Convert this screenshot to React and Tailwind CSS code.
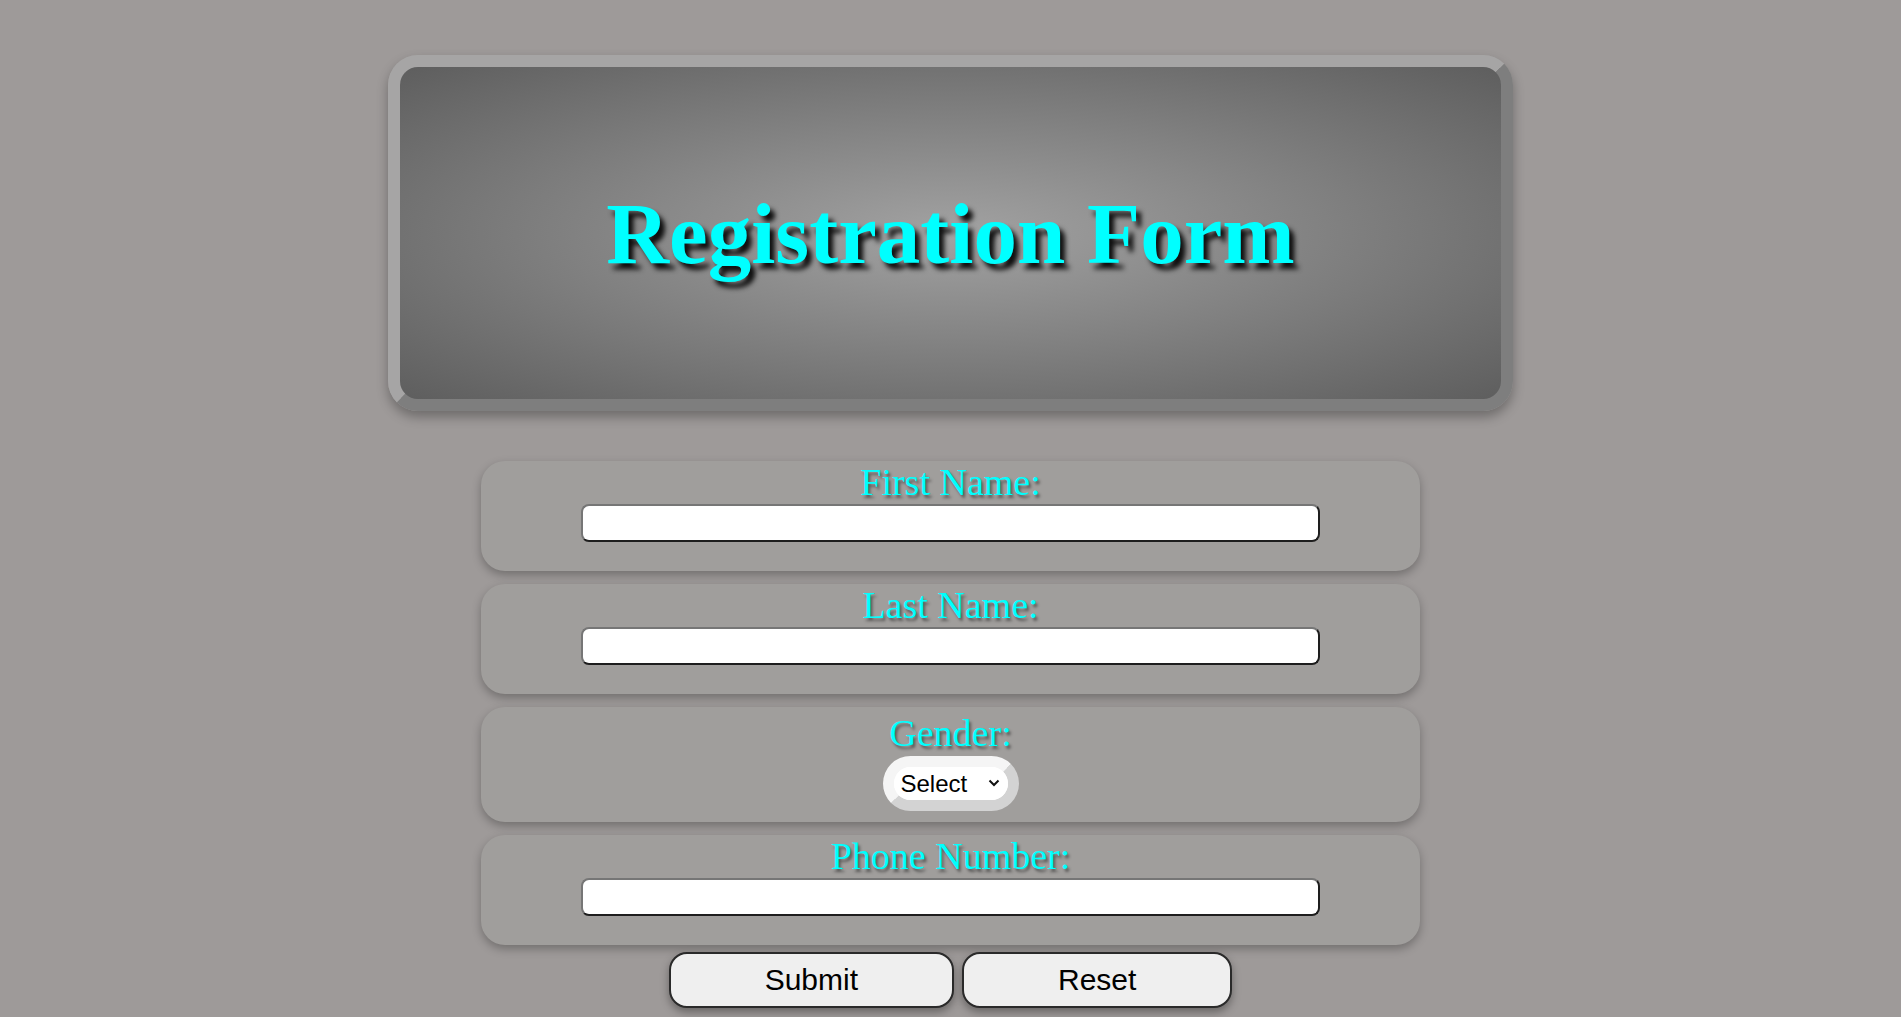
import React from "react";

const labelCls =
  "block text-[38px] leading-none text-[#00ffff] [text-shadow:2px_3px_3px_rgba(0,0,0,0.45)]";
const inputCls =
  "w-[739px] h-[38px] rounded-[8px] bg-white border-2 border-t-[#767676] border-l-[#767676] border-b-[#1e1e1e] border-r-[#1e1e1e] outline-none px-2 text-[20px]";
const rowCls =
  "w-[939px] flex flex-col items-center rounded-[24px] bg-[#a09e9c] shadow-[0_4px_10px_rgba(0,0,0,0.28)]";
const btnCls =
  "px-[94px] py-[9px] text-[30px] leading-[34px] text-black bg-[#efefef] border-2 border-[#2a2a2a] rounded-[18px] shadow-[0_4px_8px_rgba(0,0,0,0.35)]";

const TextRow = ({ label }) => (
  <div className={`${rowCls} h-[110px] pt-[2px]`}>
    <label className={`${labelCls} mb-[3px]`}>{label}</label>
    <input type="text" className={inputCls} />
  </div>
);

const App = () => {
  return (
    <div className="min-h-screen w-full bg-[#9e9a99] flex flex-col items-center pt-[55px] font-['Liberation_Serif',serif]">
      <header className="w-[1125px] h-[356px] rounded-[30px] border-[12px] border-t-[#a6a5a5] border-l-[#a6a5a5] border-b-[#7e7e7e] border-r-[#7e7e7e] shadow-[0_6px_12px_rgba(0,0,0,0.3)] bg-[radial-gradient(ellipse_at_center,#a2a2a2_0%,#5e5e5e_100%)] flex items-center justify-center">
        <h1 className="text-[87px] font-bold leading-none text-[#00ffff] [text-shadow:5px_6px_5px_rgba(0,0,0,0.9)]">
          Registration Form
        </h1>
      </header>

      <form className="flex flex-col items-center gap-[13px] mt-[50px]">
        <TextRow label="First Name:" />
        <TextRow label="Last Name:" />

        <div className={`${rowCls} h-[115px] pt-[7px]`}>
          <label className={`${labelCls} mb-[4px]`}>Gender:</label>
          <div className="relative rounded-full border-[11px] border-t-[#f5f5f5] border-l-[#f5f5f5] border-b-[#d3d3d3] border-r-[#d3d3d3] bg-white">
            <select className="appearance-none w-[114px] h-[33px] rounded-full bg-white pl-[7px] text-[24px] leading-[33px] text-black font-['Liberation_Sans',Arial,sans-serif] outline-none">
              <option>Select</option>
              <option>Male</option>
              <option>Female</option>
            </select>
            <svg
              className="absolute right-[8px] top-[12px] pointer-events-none"
              width="12"
              height="8"
              viewBox="0 0 12 8"
            >
              <path d="M1.5 1.5 L6 6 L10.5 1.5" fill="none" stroke="#111" strokeWidth="2" />
            </svg>
          </div>
        </div>

        <TextRow label="Phone Number:" />
      </form>

      <div className="flex gap-[8px] mt-[7px] font-['Liberation_Sans',Arial,sans-serif]">
        <button type="submit" className={btnCls}>
          Submit
        </button>
        <button type="reset" className={btnCls}>
          Reset
        </button>
      </div>
    </div>
  );
};

export default App;
